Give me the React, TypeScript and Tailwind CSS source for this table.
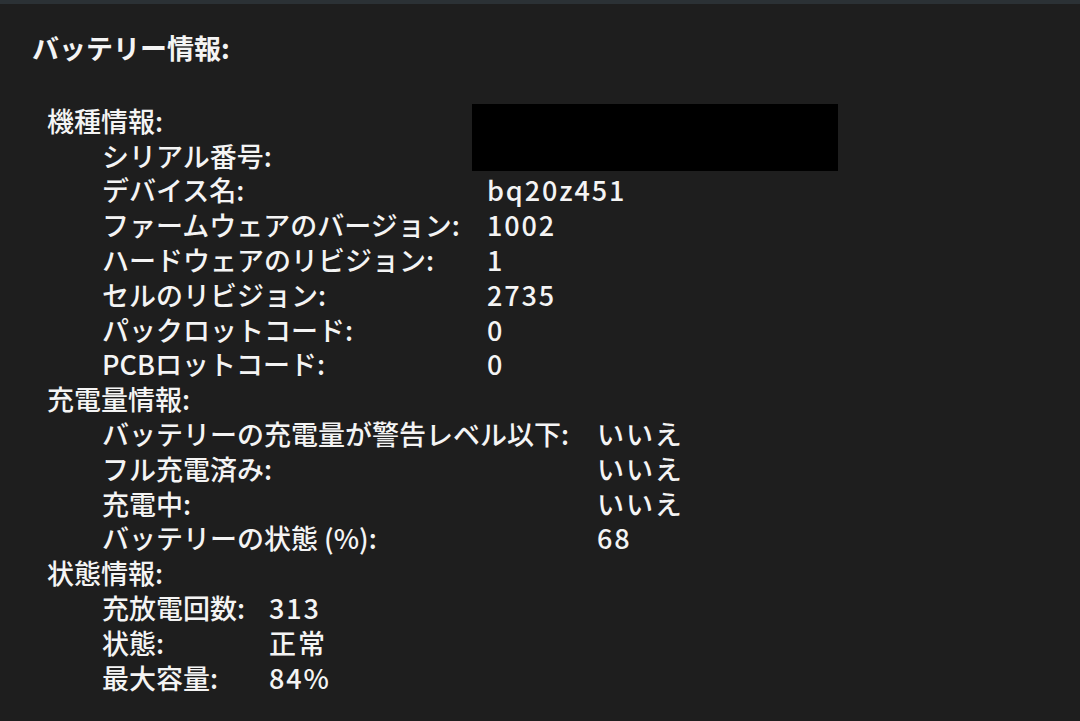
import React from "react";

type Row = { label: string; value?: string };

const model: Row[] = [
  { label: "シリアル番号:" },
  { label: "デバイス名:", value: "bq20z451" },
  { label: "ファームウェアのバージョン:", value: "1002" },
  { label: "ハードウェアのリビジョン:", value: "1" },
  { label: "セルのリビジョン:", value: "2735" },
  { label: "パックロットコード:", value: "0" },
  { label: "PCBロットコード:", value: "0" },
];

const charge: Row[] = [
  { label: "バッテリーの充電量が警告レベル以下:", value: "いいえ" },
  { label: "フル充電済み:", value: "いいえ" },
  { label: "充電中:", value: "いいえ" },
  { label: "バッテリーの状態 (%):", value: "68" },
];

const health: Row[] = [
  { label: "充放電回数:", value: "313" },
  { label: "状態:", value: "正常" },
  { label: "最大容量:", value: "84%" },
];

function Group({ title, rows, labelWidth }: { title: string; rows: Row[]; labelWidth: string }) {
  return (
    <div>
      <div className="pl-[15px]">{title}</div>
      {rows.map((r) => (
        <div key={r.label} className="flex pl-[70px]">
          <div className={labelWidth}>{r.label}</div>
          <div className="tracking-[0.07em]">{r.value}</div>
        </div>
      ))}
    </div>
  );
}

export default function App() {
  return (
    <div
      className="h-[721px] w-[1080px] overflow-hidden border-t-4 border-[#2b3135] bg-[#1e1e1e] pl-[32px] pt-[27px] text-[27px] font-medium leading-[34.8px] text-[#f4f4f4]"
      style={{ fontFamily: '"Noto Sans CJK JP", "Noto Sans", sans-serif' }}
    >
      <div className="font-bold">バッテリー情報:</div>
      <div className="mt-[38px]">
        <div className="relative">
          <Group title="機種情報:" rows={model} labelWidth="w-[385px]" />
          <div className="absolute left-[440px] top-0 h-[67px] w-[366px] bg-black" />
        </div>
        <Group title="充電量情報:" rows={charge} labelWidth="w-[495px]" />
        <Group title="状態情報:" rows={health} labelWidth="w-[167px]" />
      </div>
    </div>
  );
}
